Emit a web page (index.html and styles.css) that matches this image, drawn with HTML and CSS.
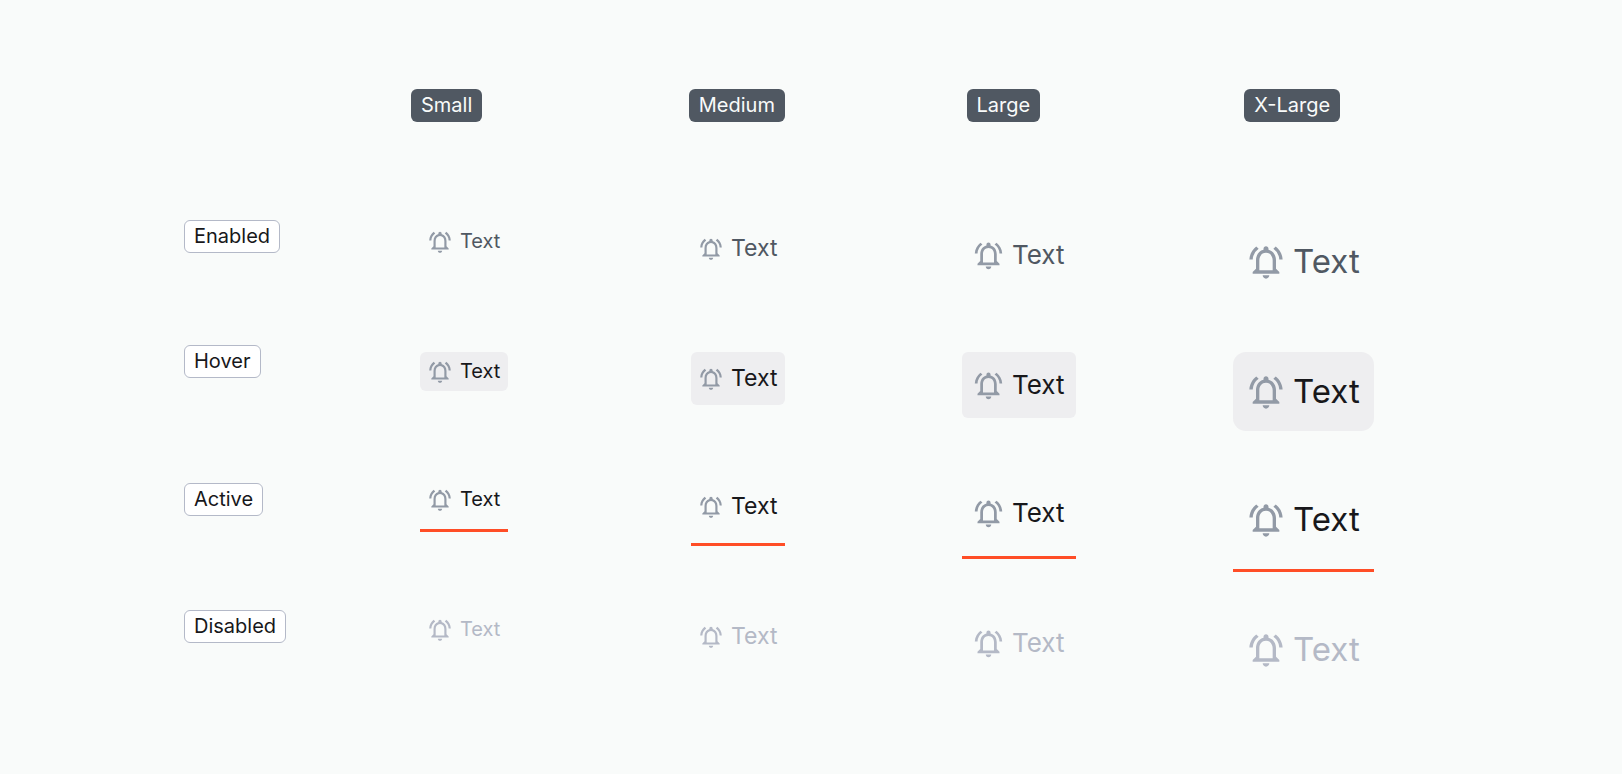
FILE: index.html
```
<!DOCTYPE html>
<html lang="en">
<head>
<meta charset="utf-8">
<title>Tab item states</title>
<link rel="stylesheet" href="styles.css">
</head>
<body>
<svg class="sprite" aria-hidden="true">
  <symbol id="bell" viewBox="0 0 24 24">
    <path d="M7.58 4.08 6.15 2.65C3.75 4.48 2.17 7.3 2.03 10.5h2a8.45 8.45 0 0 1 3.55-6.42zM19.97 10.5h2c-.15-3.2-1.73-6.02-4.12-7.85l-1.42 1.43a8.5 8.5 0 0 1 3.54 6.42zM18 11c0-3.07-1.64-5.64-4.5-6.32V4c0-.83-.67-1.5-1.5-1.5s-1.5.67-1.5 1.5v.68C7.63 5.36 6 7.92 6 11v5l-2 2v1h16v-1l-2-2v-5zm-2 6H8v-6c0-2.48 1.51-4.5 4-4.5s4 2.02 4 4.5v6zM12 22c1.1 0 2-.9 2-2h-4c0 1.1.9 2 2 2z"/>
  </symbol>
</svg>
<main class="sheet">
  <header class="sizes">
    <div><span class="badge badge-dark">Small</span></div>
    <div><span class="badge badge-dark">Medium</span></div>
    <div><span class="badge badge-dark">Large</span></div>
    <div><span class="badge badge-dark">X-Large</span></div>
  </header>
  <div class="states">
    <div><span class="badge badge-light">Enabled</span></div>
    <div><span class="badge badge-light">Hover</span></div>
    <div><span class="badge badge-light">Active</span></div>
    <div><span class="badge badge-light">Disabled</span></div>
  </div>
  <div class="tabs">
    <button class="tab small"><svg><use href="#bell"/></svg><span>Text</span></button>
    <button class="tab medium"><svg><use href="#bell"/></svg><span>Text</span></button>
    <button class="tab large"><svg><use href="#bell"/></svg><span>Text</span></button>
    <button class="tab xlarge"><svg><use href="#bell"/></svg><span>Text</span></button>

    <button class="tab small hover"><svg><use href="#bell"/></svg><span>Text</span></button>
    <button class="tab medium hover"><svg><use href="#bell"/></svg><span>Text</span></button>
    <button class="tab large hover"><svg><use href="#bell"/></svg><span>Text</span></button>
    <button class="tab xlarge hover"><svg><use href="#bell"/></svg><span>Text</span></button>

    <button class="tab small active"><svg><use href="#bell"/></svg><span>Text</span></button>
    <button class="tab medium active"><svg><use href="#bell"/></svg><span>Text</span></button>
    <button class="tab large active"><svg><use href="#bell"/></svg><span>Text</span></button>
    <button class="tab xlarge active"><svg><use href="#bell"/></svg><span>Text</span></button>

    <button class="tab small" disabled><svg><use href="#bell"/></svg><span>Text</span></button>
    <button class="tab medium" disabled><svg><use href="#bell"/></svg><span>Text</span></button>
    <button class="tab large" disabled><svg><use href="#bell"/></svg><span>Text</span></button>
    <button class="tab xlarge" disabled><svg><use href="#bell"/></svg><span>Text</span></button>
  </div>
</main>
</body>
</html>
```
FILE: styles.css
```
* {
  box-sizing: border-box;
}

body {
  margin: 0;
  background: #f9fbfa;
  color: #18181b;
  font-family: Inter, sans-serif;
}

.sprite {
  display: none;
}

.sheet {
  display: grid;
  grid-template-columns: 227px 9px minmax(0, 1fr);
  padding: 89px 100px 60px 184px;
}

.sizes {
  grid-column: 2 / 4;
  display: grid;
  grid-template-columns: repeat(4, minmax(0, 1fr));
  margin-bottom: 98px;
}

.badge {
  display: inline-block;
  padding: 0 10px;
  border-radius: 6px;
  font-size: 20px;
  line-height: 33px;
  vertical-align: top;
}

.badge-dark {
  background: #505862;
  color: #f9fbfa;
}

.badge-light {
  padding: 0 9px;
  border: 1px solid #b4b9c8;
  background: #fff;
  line-height: 31px;
}

.states {
  grid-column: 1;
  display: grid;
  grid-template-rows: 125px 138px 127px auto;
}

.tabs {
  grid-column: 3;
  display: grid;
  grid-template-columns: repeat(4, minmax(0, 1fr));
  grid-template-rows: 130px 128px 130px auto;
  align-items: start;
  justify-items: start;
  padding: 2px 18px 0 0;
}

.tab {
  display: flex;
  align-items: center;
  gap: 7px;
  margin: 0;
  border: 0;
  border-radius: 6px;
  background: none;
  color: #505862;
  font-family: inherit;
}

.tab svg {
  flex: none;
  width: 26px;
  height: 26px;
  fill: #929aa6;
}

.small {
  padding: 0 8px 0 7px;
  font-size: 20px;
  line-height: 39px;
}

.medium {
  padding: 0 8px 0 7px;
  font-size: 23px;
  line-height: 53px;
}

.large {
  padding: 0 11px 0 10px;
  font-size: 26px;
  line-height: 66px;
}

.large svg {
  width: 33px;
  height: 33px;
}

.xlarge {
  padding: 0 14px 0 13px;
  border-radius: 13px;
  font-size: 33px;
  line-height: 79px;
}

.xlarge svg {
  width: 40px;
  height: 40px;
}

.hover {
  background: #eeeef0;
  color: #18181b;
}

.active {
  padding-bottom: 10px;
  border-bottom: 3px solid #ff4d26;
  border-radius: 0;
  color: #18181b;
}

.tab:disabled {
  color: #b4b9c6;
}

.tab:disabled svg {
  fill: #b4b9c6;
}
```
